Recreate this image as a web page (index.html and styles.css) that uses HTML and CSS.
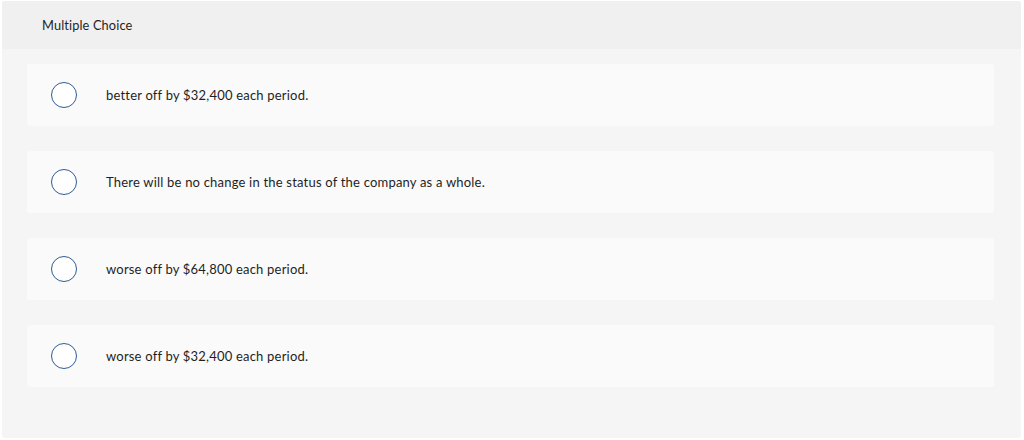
FILE: index.html
```html
<!DOCTYPE html>
<html lang="en">
<head>
<meta charset="utf-8">
<title>Multiple Choice</title>
<link rel="stylesheet" href="styles.css">
</head>
<body>
<div class="question">
  <div class="question-header">Multiple Choice</div>
  <div class="choices">
    <label class="choice"><span class="radio"></span><span class="choice-text">better off by $32,400 each period.</span></label>
    <label class="choice"><span class="radio"></span><span class="choice-text">There will be no change in the status of the company as a whole.</span></label>
    <label class="choice"><span class="radio"></span><span class="choice-text">worse off by $64,800 each period.</span></label>
    <label class="choice"><span class="radio"></span><span class="choice-text">worse off by $32,400 each period.</span></label>
  </div>
</div>
</body>
</html>
```
FILE: styles.css
```css
html, body {
  margin: 0;
  padding: 0;
  background: #ffffff;
}
body {
  font-family: "Lato", "Open Sans", sans-serif;
  color: #1f1f1f;
}
.question {
  margin: 1px 3px 0 2px;
  height: 437px;
  background: #f5f5f5;
  border-radius: 3px;
  overflow: hidden;
}
.question-header {
  height: 48px;
  background: #f0f0f0;
  padding-left: 40px;
  display: flex;
  align-items: center;
  font-size: 12.8px;
  letter-spacing: 0.12px;
  box-sizing: border-box;
}
.choices {
  padding: 15px 27px 0 25px;
  display: flex;
  flex-direction: column;
  gap: 25px;
}
.choice {
  height: 62px;
  background: #fafafa;
  border-radius: 3px;
  display: flex;
  align-items: center;
  padding-left: 24px;
  box-sizing: border-box;
}
.radio {
  width: 26px;
  height: 26px;
  box-sizing: border-box;
  border: 1.5px solid #2d5c94;
  border-radius: 50%;
  background: #ffffff;
  flex: none;
}
.choice-text {
  margin-left: 29px;
  font-size: 13px;
  letter-spacing: 0.2px;
}
```
